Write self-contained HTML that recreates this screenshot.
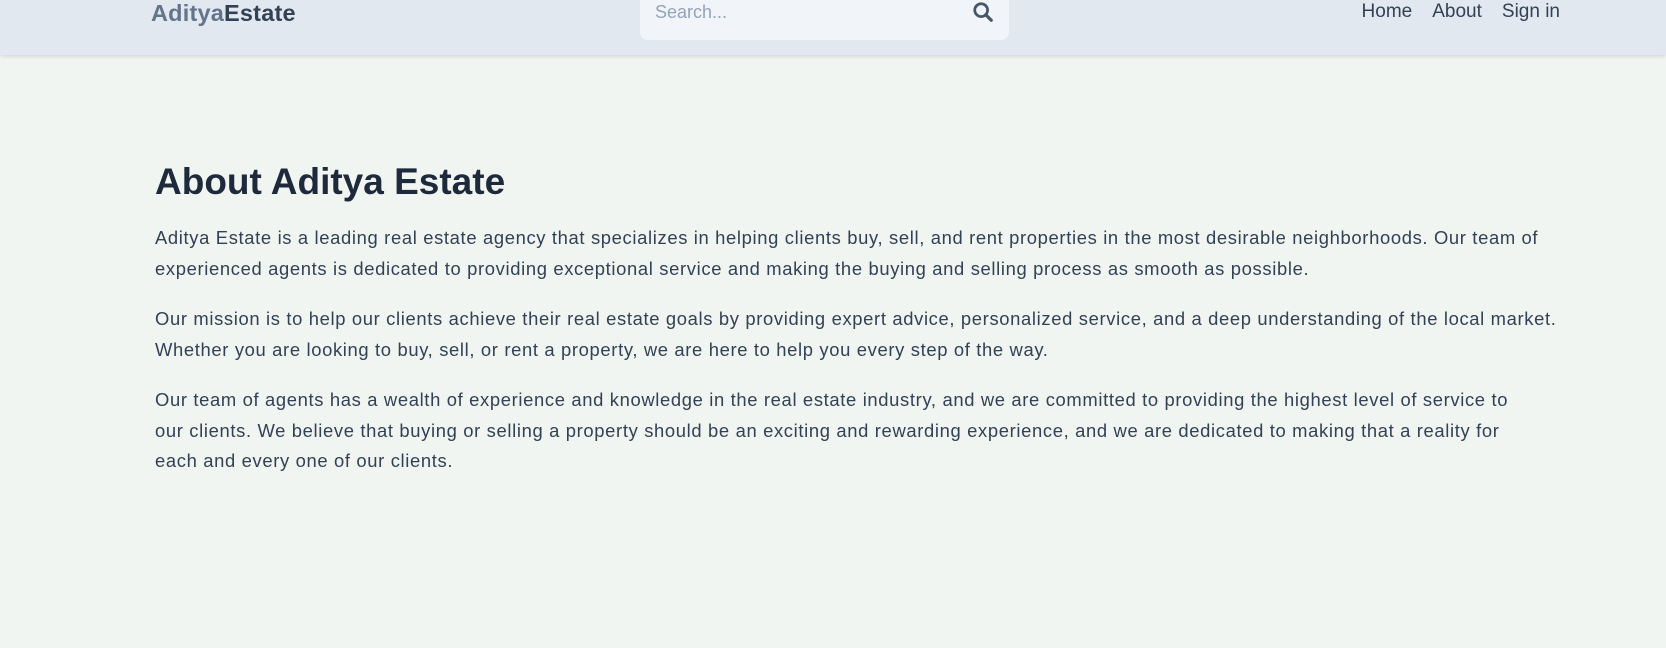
<!DOCTYPE html>
<html><head><style>
body{margin:0;width:1666px;height:648px;background:#f1f5f1;font-family:"Liberation Sans",sans-serif;overflow:hidden}
header{position:absolute;left:0;top:0;width:1666px;height:55px;background:#e2e8f0;box-shadow:0 1px 4px rgba(0,0,0,.15)}
.logo{position:absolute;left:151px;top:-1px;font-size:23.5px;font-weight:bold;color:#64748b;line-height:28px;letter-spacing:0.2px}
.logo b{color:#334155}
.search{position:absolute;left:640px;top:-10px;width:369px;height:50px;background:#f1f5f9;border-radius:8px}
.search span{position:absolute;left:15px;top:10px;font-size:18px;color:#94a3b8;line-height:25px}
.search svg{position:absolute;right:15px;top:11px}
nav{position:absolute;right:106px;top:-1px;font-size:19px;color:#334155;line-height:26px}
nav span{margin-left:20px}
main{position:absolute;left:155px;top:157px;width:1500px;color:#334155}
h1{margin:0;font-size:37px;color:#1e293b;line-height:50px;font-weight:bold}
p{margin:8px 0 20px;font-size:18.4px;letter-spacing:0.65px;line-height:30.5px;white-space:nowrap}
h1+p{margin-top:16px}
</style></head><body>
<header>
<div class="logo">Aditya<b>Estate</b></div>
<div class="search"><span>Search...</span><svg width="22" height="22" viewBox="0 0 24 24"><circle cx="10" cy="10" r="7" fill="none" stroke="#475569" stroke-width="3"/><path d="M15 15l6 6" stroke="#475569" stroke-width="3.5" stroke-linecap="round"/></svg></div>
<nav><span>Home</span><span>About</span><span>Sign in</span></nav>
</header>
<main>
<h1>About Aditya Estate</h1>
<p>Aditya Estate is a leading real estate agency that specializes in helping clients buy, sell, and rent properties in the most desirable neighborhoods. Our team of<br>experienced agents is dedicated to providing exceptional service and making the buying and selling process as smooth as possible.</p>
<p>Our mission is to help our clients achieve their real estate goals by providing expert advice, personalized service, and a deep understanding of the local market.<br>Whether you are looking to buy, sell, or rent a property, we are here to help you every step of the way.</p>
<p>Our team of agents has a wealth of experience and knowledge in the real estate industry, and we are committed to providing the highest level of service to<br>our clients. We believe that buying or selling a property should be an exciting and rewarding experience, and we are dedicated to making that a reality for<br>each and every one of our clients.</p>
</main>
</body></html>
